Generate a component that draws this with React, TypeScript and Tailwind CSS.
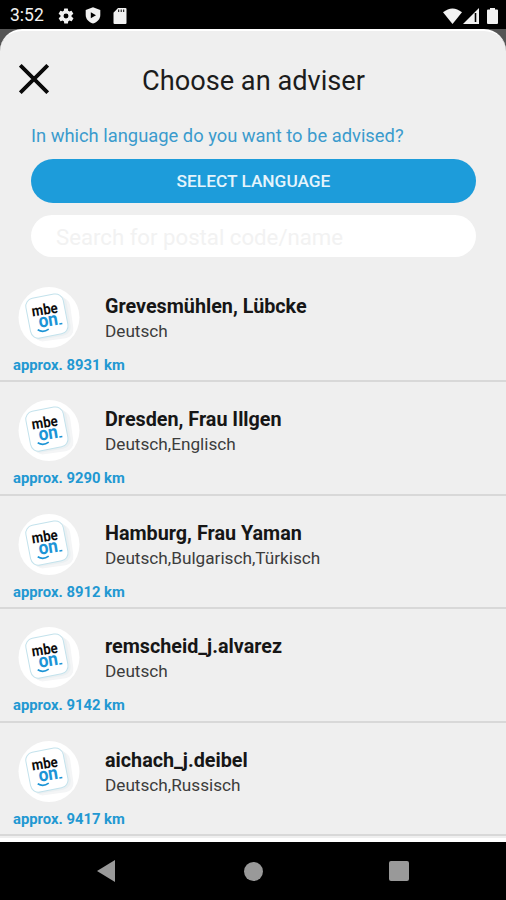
import React from 'react';

interface Adviser {
  name: string;
  languages: string;
  distance: string;
}

const advisers: Adviser[] = [
  { name: 'Grevesmühlen, Lübcke', languages: 'Deutsch', distance: 'approx. 8931 km' },
  { name: 'Dresden, Frau Illgen', languages: 'Deutsch,Englisch', distance: 'approx. 9290 km' },
  { name: 'Hamburg, Frau Yaman', languages: 'Deutsch,Bulgarisch,Türkisch', distance: 'approx. 8912 km' },
  { name: 'remscheid_j.alvarez', languages: 'Deutsch', distance: 'approx. 9142 km' },
  { name: 'aichach_j.deibel', languages: 'Deutsch,Russisch', distance: 'approx. 9417 km' },
];

const StatusBar: React.FC = () => (
  <div className="flex h-[29px] shrink-0 items-center justify-between bg-black pt-[2px] pr-[8px] pl-[10px] text-[#f2f2f2]">
    <div className="flex items-center">
      <span className="w-[47px] text-[17.5px] leading-none">3:52</span>
      <svg className="h-[18px] w-[18px]" viewBox="0 0 24 24" fill="currentColor">
        <path d="M19.4 13a7.6 7.6 0 0 0 0-2l2.1-1.6a.5.5 0 0 0 .1-.65l-2-3.46a.5.5 0 0 0-.6-.22l-2.5 1a7.3 7.3 0 0 0-1.7-1L14.5 2.4A.5.5 0 0 0 14 2h-4a.5.5 0 0 0-.5.4l-.4 2.67a7.3 7.3 0 0 0-1.7 1l-2.5-1a.5.5 0 0 0-.6.22l-2 3.46a.5.5 0 0 0 .1.65L4.6 11a7.6 7.6 0 0 0 0 2l-2.1 1.6a.5.5 0 0 0-.1.65l2 3.46a.5.5 0 0 0 .6.22l2.5-1a7.3 7.3 0 0 0 1.7 1l.4 2.67a.5.5 0 0 0 .5.4h4a.5.5 0 0 0 .5-.4l.4-2.67a7.3 7.3 0 0 0 1.7-1l2.5 1a.5.5 0 0 0 .6-.22l2-3.46a.5.5 0 0 0-.1-.65zM12 15.3a3.3 3.3 0 1 1 0-6.6 3.3 3.3 0 0 1 0 6.6z" />
      </svg>
      <svg className="ml-[10px] h-[17px] w-[16px]" viewBox="0 0 16 17">
        <path d="M8 .2 15.3 3v5c0 4-3 7.3-7.3 8.6C3.7 15.3.7 12 .7 8V3z" fill="currentColor" />
        <path d="M5.8 5.2v6l5.2-3z" fill="#000" />
      </svg>
      <svg className="ml-[12px] h-[16px] w-[14px]" viewBox="0 0 14 16">
        <path d="M5 0h7.5Q13.5 0 13.5 1v14q0 1-1 1h-11q-1 0-1-1V4.7z" fill="currentColor" />
        <path d="M5.7 1.5v2.5M8.2 1.5v2.5M10.7 1.5v2.5" stroke="#000" strokeWidth="1" />
      </svg>
    </div>
    <div className="flex items-center">
      <svg className="h-[16px] w-[19px]" viewBox="0 0 19 16">
        <path d="M0 4.2Q9.5-3.4 19 4.2L9.5 16z" fill="currentColor" />
      </svg>
      <svg className="ml-[1px] h-[16px] w-[16px]" viewBox="0 0 16 16">
        <path d="M16 0v16H0z" fill="currentColor" />
        <path d="M12.5 5v9" stroke="#000" strokeWidth="1.6" />
      </svg>
      <svg className="ml-[8px] h-[16px] w-[11px]" viewBox="0 0 11 16">
        <path d="M3 0h5v1.5h2q1 0 1 1V15q0 1-1 1H1q-1 0-1-1V2.5q0-1 1-1h2z" fill="currentColor" />
      </svg>
    </div>
  </div>
);

const MbeonLogo: React.FC = () => (
  <svg className="h-[62px] w-[62px] shrink-0" viewBox="0 0 62 62">
    <circle cx="31" cy="30.5" r="30.5" fill="#fff" />
    <rect x="14" y="12" width="40" height="41" rx="9" fill="#f4f5f6" transform="rotate(-8 34 33)" />
    <rect x="11" y="10" width="40" height="41" rx="9" fill="#ebf0f2" transform="rotate(-10 31 31)" />
    <rect x="10" y="8.800" width="38" height="40.5" rx="8" fill="#fff" stroke="#c3e2ec" strokeWidth="1" transform="rotate(-11 29 29.5)" />
    <g transform="rotate(-9 28 28)" fontFamily="Roboto, sans-serif">
      <text x="14.500" y="27.500" fontSize="15" fontWeight="700" textLength="26" lengthAdjust="spacingAndGlyphs" fill="#0c0c0c">mbe</text>
      <text x="19.500" y="39.500" fontSize="19" fontWeight="700" textLength="19.5" lengthAdjust="spacingAndGlyphs" fill="#1c94d6">on</text>
      <path d="M17.500 41.300q5 4.300 11 1" fill="none" stroke="#1c94d6" strokeWidth="1.6" />
      <path d="M39.800 39h3" stroke="#1c94d6" strokeWidth="1.6" />
    </g>
  </svg>
);

const AdviserRow: React.FC<{ adviser: Adviser }> = ({ adviser }) => (
  <li className="h-[113.4px] border-b-2 border-[#d8d8d8] pt-[18px] pl-[13px]">
    <div className="flex pl-[5px]">
      <MbeonLogo />
      <div className="ml-[25px] pt-[7px]">
        <p className="text-[19.75px] leading-[25px] font-bold whitespace-nowrap text-[#161616]">{adviser.name}</p>
        <p className="text-[17.2px] leading-[25px] whitespace-nowrap text-[#3c3c3c]">{adviser.languages}</p>
      </div>
    </div>
    <p className="mt-[6px] text-[14.8px] leading-[20px] font-bold text-[#2298d2]">{adviser.distance}</p>
  </li>
);

const NavigationBar: React.FC = () => (
  <div className="flex h-[58px] shrink-0 items-center justify-between bg-black px-[97px]">
    <svg className="h-[22px] w-[18px]" viewBox="0 0 18 22">
      <path d="M18 0v22L0 11z" fill="#999" />
    </svg>
    <div className="ml-[2px] h-[19px] w-[19px] rounded-full bg-[#999]" />
    <div className="h-[20px] w-[20px] rounded-[2px] bg-[#999]" />
  </div>
);

const App: React.FC = () => {
  return (
    <div className="flex h-[900px] w-[506px] flex-col overflow-hidden bg-[#555] font-['Roboto',sans-serif]">
      <StatusBar />
      <main className="flex h-[813px] shrink-0 flex-col overflow-hidden rounded-t-[22px] border-t-2 border-white bg-[#efefef]">
        <header className="flex h-[94px] items-center pt-[2px] pl-[19px]">
          <svg className="h-[30px] w-[30px]" viewBox="0 0 30 30" stroke="#0a0a0a" strokeWidth="3.8">
            <path d="M1.3 1.3 28.7 28.7M28.7 1.3 1.3 28.7" />
          </svg>
          <h1 className="ml-[93px] pt-[5px] text-[27.2px] leading-none text-[#1c1c1c]">Choose an adviser</h1>
        </header>
        <section className="flex flex-col pr-[30px] pl-[31px]">
          <p className="text-[18.35px] leading-[22px] text-[#3b9bcd]">In which language do you want to be advised?</p>
          <button className="mt-[12px] h-[44px] rounded-full bg-[#1d9cda] pt-[2px] text-[17.3px] font-medium text-[#e4f4fc]">SELECT LANGUAGE</button>
          <input
            className="mt-[12px] h-[42px] rounded-full bg-white px-[25px] pt-[1px] text-[22.2px] outline-none placeholder:text-[#f2f2f2]"
            placeholder="Search for postal code/name"
          />
        </section>
        <ul className="mt-[12px]">
          {advisers.map((adviser) => (
            <AdviserRow key={adviser.name} adviser={adviser} />
          ))}
        </ul>
        <div className="mt-[2px] flex-1 bg-white" />
      </main>
      <NavigationBar />
    </div>
  );
};

export default App;
